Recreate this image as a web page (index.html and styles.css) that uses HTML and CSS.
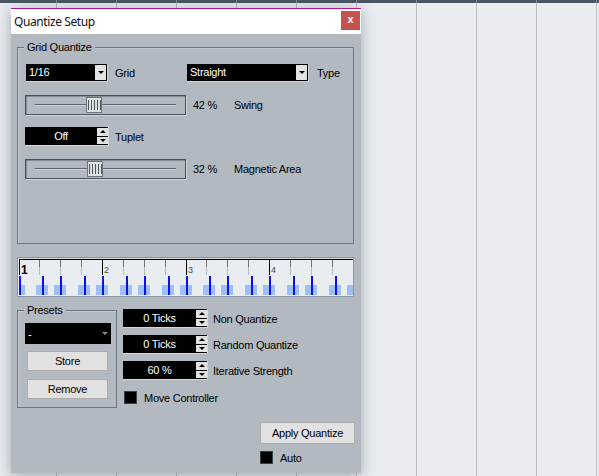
FILE: index.html
```html
<!DOCTYPE html>
<html>
<head>
<meta charset="utf-8">
<link rel="stylesheet" href="styles.css">
</head>
<body>
<div class="topbar"></div>
<div class="dlg">
  <div class="titlebar">
    <span class="title">Quantize Setup</span>
    <span class="close">x</span>
  </div>
  <div class="dlg-body">
    <div class="group grid-group">
      <span class="legend">Grid Quantize</span>
      <div class="row r1">
        <div class="dd dd-grid"><span class="dd-val">1/16</span><span class="dd-btn"></span></div>
        <span class="lbl lbl-grid">Grid</span>
        <div class="dd dd-type"><span class="dd-val">Straight</span><span class="dd-btn"></span></div>
        <span class="lbl lbl-type">Type</span>
      </div>
      <div class="row r2">
        <div class="slider"><div class="track"></div><div class="thumb" style="left:60px"></div></div>
        <span class="pct">42 %</span>
        <span class="lbl">Swing</span>
      </div>
      <div class="row r3">
        <div class="spin spin-tuplet"><span class="spin-val">Off</span><span class="spin-btns"><i class="sb up"></i><i class="sb dn"></i></span></div>
        <span class="lbl lbl-tuplet">Tuplet</span>
      </div>
      <div class="row r4">
        <div class="slider"><div class="track"></div><div class="thumb" style="left:61px"></div></div>
        <span class="pct">32 %</span>
        <span class="lbl">Magnetic Area</span>
      </div>
    </div>

    <svg class="ruler" width="337" height="40" viewBox="0 0 337 40">
      <rect x="0.5" y="0.5" width="336" height="39" fill="#e9edf1" stroke="#8d959c"/>
      <rect x="1" y="1" width="335" height="1" fill="#d3d8dc"/>
      <rect x="2" y="2" width="334" height="1" fill="#000"/>
      <g fill="#707070">
        <rect x="22" y="3" width="1" height="7"/><rect x="43" y="3" width="1" height="7"/><rect x="64" y="3" width="1" height="7"/>
        <rect x="106" y="3" width="1" height="7"/><rect x="127" y="3" width="1" height="7"/><rect x="148" y="3" width="1" height="7"/>
        <rect x="189" y="3" width="1" height="7"/><rect x="210" y="3" width="1" height="7"/><rect x="231" y="3" width="1" height="7"/>
        <rect x="273" y="3" width="1" height="7"/><rect x="294" y="3" width="1" height="7"/><rect x="315" y="3" width="1" height="7"/>
      </g>
      <g fill="#b4b8bc">
        <rect x="22" y="10" width="1" height="8"/><rect x="43" y="10" width="1" height="8"/><rect x="64" y="10" width="1" height="8"/>
        <rect x="106" y="10" width="1" height="8"/><rect x="127" y="10" width="1" height="8"/><rect x="148" y="10" width="1" height="8"/>
        <rect x="189" y="10" width="1" height="8"/><rect x="210" y="10" width="1" height="8"/><rect x="231" y="10" width="1" height="8"/>
        <rect x="273" y="10" width="1" height="8"/><rect x="294" y="10" width="1" height="8"/><rect x="315" y="10" width="1" height="8"/>
      </g>
      <g fill="#000">
        <rect x="2" y="2" width="1" height="16"/><rect x="85" y="2" width="1" height="16"/>
        <rect x="169" y="2" width="1" height="16"/><rect x="252" y="2" width="1" height="16"/>
      </g>
      <text x="4" y="16.5" class="bar-num bar-one">1</text>
      <text x="87" y="16" class="bar-num">2</text>
      <text x="171" y="16" class="bar-num">3</text>
      <text x="254" y="16" class="bar-num">4</text>
      <g fill="#9dc0f8">
        <rect x="2" y="28" width="6" height="10"/>
        <rect x="19" y="28" width="12" height="10"/><rect x="37" y="28" width="12" height="10"/>
        <rect x="61" y="28" width="12" height="10"/><rect x="79" y="28" width="12" height="10"/>
        <rect x="103" y="28" width="12" height="10"/><rect x="121" y="28" width="12" height="10"/>
        <rect x="145" y="28" width="12" height="10"/><rect x="163" y="28" width="12" height="10"/>
        <rect x="186" y="28" width="12" height="10"/><rect x="204" y="28" width="12" height="10"/>
        <rect x="228" y="28" width="12" height="10"/><rect x="246" y="28" width="12" height="10"/>
        <rect x="270" y="28" width="12" height="10"/><rect x="288" y="28" width="12" height="10"/>
        <rect x="312" y="28" width="12" height="10"/><rect x="330" y="28" width="6" height="10"/>
      </g>
      <g fill="#0c10f0">
        <rect x="2" y="19" width="2" height="19"/><rect x="25" y="19" width="2" height="19"/>
        <rect x="43" y="19" width="2" height="19"/><rect x="67" y="19" width="2" height="19"/>
        <rect x="85" y="19" width="2" height="19"/><rect x="109" y="19" width="2" height="19"/>
        <rect x="127" y="19" width="2" height="19"/><rect x="151" y="19" width="2" height="19"/>
        <rect x="169" y="19" width="2" height="19"/><rect x="192" y="19" width="2" height="19"/>
        <rect x="210" y="19" width="2" height="19"/><rect x="234" y="19" width="2" height="19"/>
        <rect x="252" y="19" width="2" height="19"/><rect x="276" y="19" width="2" height="19"/>
        <rect x="294" y="19" width="2" height="19"/><rect x="318" y="19" width="2" height="19"/>
      </g>
    </svg>

    <div class="lower">
      <div class="group presets">
        <span class="legend">Presets</span>
        <div class="dd-presets">-</div>
        <button class="btn btn-store">Store</button>
        <button class="btn btn-remove">Remove</button>
      </div>
      <div class="opts">
        <div class="row orow">
          <div class="spin"><span class="spin-val">0 Ticks</span><span class="spin-btns"><i class="sb up"></i><i class="sb dn"></i></span></div>
          <span class="lbl olbl">Non Quantize</span>
        </div>
        <div class="row orow">
          <div class="spin"><span class="spin-val">0 Ticks</span><span class="spin-btns"><i class="sb up"></i><i class="sb dn"></i></span></div>
          <span class="lbl olbl">Random Quantize</span>
        </div>
        <div class="row orow">
          <div class="spin"><span class="spin-val">60 %</span><span class="spin-btns"><i class="sb up"></i><i class="sb dn"></i></span></div>
          <span class="lbl olbl">Iterative Strength</span>
        </div>
        <div class="row orow crow">
          <span class="chk"></span>
          <span class="lbl clbl">Move Controller</span>
        </div>
      </div>
    </div>

    <div class="apply-area">
      <button class="btn btn-apply">Apply Quantize</button>
      <div class="row auto-row">
        <span class="chk"></span>
        <span class="lbl clbl">Auto</span>
      </div>
    </div>
  </div>
</div>
</body>
</html>
```

FILE: styles.css
```css
html, body {
  margin: 0;
  padding: 0;
}
body {
  width: 599px;
  height: 476px;
  overflow: hidden;
  position: relative;
  background-color: #e9edf1;
  background-image: repeating-linear-gradient(90deg, transparent 0 56px, #b9bdc2 56px 57px, transparent 57px 60px);
  font-family: "Liberation Sans", Arial, sans-serif;
}
.topbar {
  height: 3px;
  background-color: #4a5662;
  background-image: repeating-linear-gradient(90deg, transparent 0 56px, #7f8a95 56px 57px, transparent 57px 60px);
}
.dlg {
  position: absolute;
  left: 11px;
  top: 8px;
  width: 350px;
  height: 465px;
  box-sizing: border-box;
  border-top: 1px solid #b0169c;
  background: #b2b9c0;
  box-shadow: 0 3px 14px rgba(40, 50, 60, 0.38);
}
.titlebar {
  height: 25px;
  background: #fff;
  display: flex;
  align-items: center;
  padding-left: 3px;
}
.title {
  font-family: "Noto Sans", "Open Sans", sans-serif;
  font-size: 12px;
  letter-spacing: -0.4px;
  color: #111;
}
.close {
  margin-left: auto;
  margin-right: 1px;
  align-self: flex-start;
  margin-top: 2px;
  width: 19px;
  height: 19px;
  background: #c75050;
  color: #fff;
  font-size: 11px;
  font-weight: bold;
  line-height: 17px;
  text-align: center;
}
.dlg-body {
  padding: 13px 0 0 6px;
  font-size: 11px;
  letter-spacing: -0.25px;
  color: #000;
}
.group {
  position: relative;
  box-sizing: border-box;
  border: 1px solid #6f777e;
  box-shadow: inset 1px 1px 0 #c3c9cf;
}
.legend {
  position: absolute;
  top: -7px;
  left: 6px;
  padding: 0 3px;
  line-height: 13px;
  background: #b2b9c0;
}
.grid-group {
  width: 337px;
  height: 197px;
  padding: 16px 0 0 8px;
}
.row {
  display: flex;
  align-items: center;
}
.r1 { height: 18px; }
.r2 { margin-top: 13px; margin-left: -1px; }
.r3 { margin-top: 12px; margin-left: -1px; }
.r4 { margin-top: 13px; margin-left: -1px; }
.lbl { white-space: nowrap; }
.lbl-grid { width: 72px; margin-left: 7px; }
.lbl-type { margin-left: 8px; }
.lbl-tuplet { margin-left: 6px; }

.dd {
  display: flex;
  height: 18px;
  box-sizing: border-box;
  background: #000;
  padding: 1px;
  color: #fff;
  border-right: 1px solid #cfd4d8;
  border-bottom: 1px solid #cfd4d8;
}
.dd-grid { width: 82px; }
.dd-type { width: 122px; }
.dd-val {
  flex: 1;
  padding-left: 2px;
  line-height: 15px;
}
.dd-btn {
  width: 11px;
  background: #e3e3e3;
  display: flex;
  align-items: center;
  justify-content: center;
}
.dd-btn::after {
  content: "";
  border-left: 3px solid transparent;
  border-right: 3px solid transparent;
  border-top: 3px solid #000;
}

.slider {
  position: relative;
  width: 161px;
  height: 20px;
  box-sizing: border-box;
  border: 1px solid #4a5158;
  box-shadow: inset 1px 1px 0 #858c93, 1px 1px 0 #d2d6da;
}
.track {
  position: absolute;
  left: 9px;
  top: 8px;
  width: 141px;
  height: 1px;
  background: #5f676e;
  box-shadow: 0 1px 0 #cdd2d6;
}
.thumb {
  position: absolute;
  top: 1px;
  width: 16px;
  height: 16px;
  box-sizing: border-box;
  border: 1px solid #6c737a;
  background-color: #dee1e4;
  background-image: repeating-linear-gradient(90deg, #4d545b 0 1px, transparent 1px 3px);
  background-size: 13px 10px;
  background-position: 1px 2px;
  background-repeat: no-repeat;
}
.pct { margin-left: 7px; width: 41px; }

.spin {
  display: flex;
  width: 85px;
  height: 19px;
  box-sizing: border-box;
  background: #000;
  border-right: 1px solid #d3d8dc;
  border-bottom: 1px solid #d3d8dc;
}
.spin-tuplet { width: 84px; }
.spin-val {
  flex: 1;
  color: #fff;
  text-align: center;
  line-height: 18px;
}
.spin-btns {
  width: 11px;
  display: flex;
  flex-direction: column;
  gap: 1px;
  padding: 1px 0 1px 0;
  box-sizing: border-box;
}
.sb {
  flex: 1;
  background: #e2e2e2;
  display: flex;
  align-items: center;
  justify-content: center;
}
.sb.up::after {
  content: "";
  border-left: 3px solid transparent;
  border-right: 3px solid transparent;
  border-bottom: 3px solid #000;
}
.sb.dn::after {
  content: "";
  border-left: 3px solid transparent;
  border-right: 3px solid transparent;
  border-top: 3px solid #000;
}

.ruler {
  display: block;
  margin-top: 13px;
}
.bar-num {
  font-family: "Liberation Sans", Arial, sans-serif;
  font-size: 9px;
  fill: #4a4a4a;
}
.bar-one {
  font-size: 12px;
  font-weight: bold;
  fill: #000;
}

.lower {
  display: flex;
  align-items: flex-start;
  margin-top: 13px;
}
.presets {
  width: 100px;
  height: 98px;
  padding: 12px 0 0 7px;
}
.dd-presets {
  width: 86px;
  height: 21px;
  box-sizing: border-box;
  background: #000;
  color: #fff;
  padding-left: 3px;
  display: flex;
  align-items: center;
}
.dd-presets::after {
  content: "";
  margin-left: auto;
  margin-right: 3px;
  border-left: 3px solid transparent;
  border-right: 3px solid transparent;
  border-top: 3px solid #7f8c98;
}
.btn {
  display: flex;
  align-items: center;
  justify-content: center;
  box-sizing: border-box;
  padding: 0;
  background: #e1e1e1;
  border: 1px solid #adadad;
  font-family: inherit;
  font-size: 11px;
  letter-spacing: -0.25px;
  color: #000;
}
.btn-store {
  width: 81px;
  height: 20px;
  margin: 7px 0 0 2px;
}
.btn-remove {
  width: 81px;
  height: 20px;
  margin: 8px 0 0 2px;
}
.opts {
  margin-left: 6px;
  margin-top: -1px;
  display: flex;
  flex-direction: column;
  gap: 7px;
}
.orow { height: 19px; }
.olbl { margin-left: 5px; }
.crow { margin-top: 1px; }
.chk {
  width: 13px;
  height: 13px;
  box-sizing: border-box;
  background: #000;
  border: 1px solid #3b4046;
  margin-left: 1px;
}
.clbl { margin-left: 7px; }

.apply-area {
  margin: 14px 0 0 243px;
  width: 95px;
}
.btn-apply {
  width: 95px;
  height: 22px;
}
.auto-row {
  margin-top: 7px;
  height: 13px;
}
.auto-row .chk { margin-left: 0; }
```
